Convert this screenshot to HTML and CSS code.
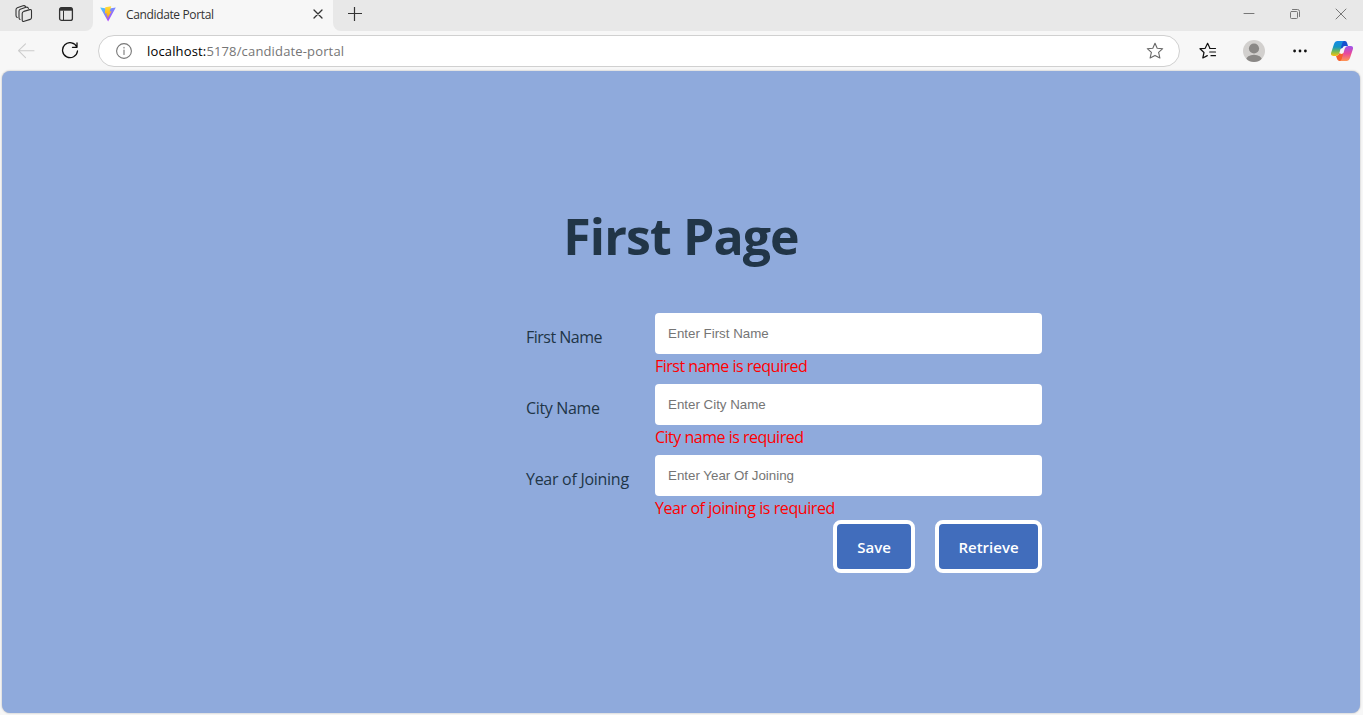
FILE: index.html
```html
<!DOCTYPE html>
<html lang="en">
<head>
<meta charset="utf-8">
<title>Candidate Portal</title>
<link rel="stylesheet" href="styles.css">
</head>
<body>
<div class="window">
  <header class="tabstrip">
    <div class="tools">
      <svg class="icon workspaces" width="18" height="18" viewBox="0 0 18 18"><path d="M8.8 6.4 14.8 4.6Q16.5 4.2 16.5 6V12.5Q16.5 14 15.2 14.4L9.2 16.3Q7.2 17 7.2 15V8.5Q7.2 6.9 8.8 6.4ZM5 14.5Q4 14 4 12.5V6.3Q4 4.8 5.3 4.3L11 2.3Q12.8 1.8 13.5 3.4M2.2 12.5Q1 12 1 10.2V4.7Q1 3.3 2.3 2.8L8 .8Q9.6.3 10.4 1.4"/></svg>
      <svg class="icon panes" width="16" height="16" viewBox="0 0 16 16"><rect x="1.6" y="1.6" width="12.8" height="12.8" rx="2"/><path class="bar" d="M2 3.2H14"/><path class="divider" d="M5.5 5V14"/></svg>
    </div>
    <div class="tab">
      <svg class="vite" width="16" height="16" viewBox="0 0 16 16"><defs><linearGradient id="v" x1="0" y1="0" x2=".7" y2="1"><stop stop-color="#41d1ff"/><stop offset="1" stop-color="#bd34fe"/></linearGradient><linearGradient id="b" x1="0" y1="0" x2="0" y2="1"><stop stop-color="#ffdf3d"/><stop offset="1" stop-color="#ffa000"/></linearGradient></defs><path fill="url(#v)" d="M.2 1.5 8 2.7 15.8 1.5 8.1 15.4Z"/><path fill="url(#b)" d="M11.2.2 5.3 1.2 4.9 7.6 6.8 7.2 6.4 9.8 7.7 9.4 7.1 13 11.6 5.3 9.6 5.7Z"/></svg>
      <span class="tab-title">Candidate Portal</span>
      <svg class="icon tab-close" width="10" height="10" viewBox="0 0 10 10"><path d="M1 1 9 9M9 1 1 9"/></svg>
    </div>
    <svg class="icon new-tab" width="14" height="14" viewBox="0 0 14 14"><path d="M0 6.5H14M6.5 0V14"/></svg>
    <div class="controls">
      <svg class="icon" width="12" height="12" viewBox="0 0 12 12"><path d="M1 5.5H11"/></svg>
      <svg class="icon" width="12" height="12" viewBox="0 0 12 12"><rect x="1.5" y="3.5" width="7" height="7" rx="1"/><path d="M3.5 1.5H8.5Q10.5 1.5 10.5 3.5V8.5"/></svg>
      <svg class="icon" width="12" height="12" viewBox="0 0 12 12"><path d="M1 1 11 11M11 1 1 11"/></svg>
    </div>
  </header>
  <nav class="toolbar">
    <svg class="icon back" width="18" height="16" viewBox="0 0 18 16"><path d="M17 7.7H1.5M8.5.8 1.5 7.7 8.5 14.6"/></svg>
    <svg class="icon reload" width="18" height="18" viewBox="0 0 18 18"><path d="M15.9 5.1A7.5 7.5 0 1 0 16.5 9M16 1V5.3H11.5"/></svg>
    <div class="address">
      <svg class="icon info" width="16" height="16" viewBox="0 0 16 16"><circle cx="8" cy="8" r="7.4"/><path d="M8 7V11.5M8 4.3V5"/></svg>
      <span class="url"><b>localhost:</b>5178/candidate-portal</span>
      <svg class="icon star" width="18" height="18" viewBox="0 0 18 18"><path d="M9 1.2 11.2 6.3 16.7 6.7 12.6 10.4 13.9 16 9 13.4 4.1 16 5.4 10.4 1.3 6.7 6.8 6.3Z"/></svg>
    </div>
    <svg class="icon favorites" width="18" height="18" viewBox="0 0 18 18"><path d="M10.7 5.8 8.6 1.3 6.2 6.3 1 6.7 5 10.5 3.8 16 8.3 13.6M10.7 6.5H16.5M10.7 10H16.5M12 13.7H16.5"/></svg>
    <svg class="avatar" width="22" height="22" viewBox="0 0 22 22"><defs><clipPath id="a"><circle cx="11" cy="11" r="11"/></clipPath></defs><g clip-path="url(#a)"><path fill="#d2d0ce" d="M0 0H22V22H0Z"/><circle cx="11" cy="8.5" r="5.1" fill="#8a8886"/><ellipse cx="11" cy="20" rx="8" ry="5.2" fill="#8a8886"/></g></svg>
    <svg class="more" width="14" height="4" viewBox="0 0 14 4"><circle cx="1.6" cy="2" r="1.4"/><circle cx="7" cy="2" r="1.4"/><circle cx="12.4" cy="2" r="1.4"/></svg>
    <svg class="copilot" width="22" height="20" viewBox="0 0 22 20"><defs><linearGradient id="c1" x1="0" y1="0" x2="0" y2="1"><stop stop-color="#1689e8"/><stop offset=".4" stop-color="#1496c2"/><stop offset=".72" stop-color="#7dbb50"/><stop offset="1" stop-color="#ffc20a"/></linearGradient><linearGradient id="c2" x1="0" y1="0" x2="0" y2="1"><stop stop-color="#9b54ef"/><stop offset=".5" stop-color="#e9489b"/><stop offset="1" stop-color="#ff9652"/></linearGradient></defs><path fill="#1550ce" d="M10 0H14Q15.5 0 16 1.7L17 5H13.8Q12.2 5 11.5 7L9 8Z"/><path fill="#f65f2b" d="M5 15 6.2 18.2Q6.8 20 8.6 20H11L13 12 10.5 13 8.3 12.2Q7.5 15 5 15Z"/><path fill="url(#c1)" d="M6.5 0H13Q11.8.4 11.2 2.3L8.3 12.2Q7.5 15 5 15H2.5Q-1 15 .3 11.2L3 3Q4 0 6.5 0Z"/><path fill="url(#c2)" d="M15.5 20H9Q10.2 19.6 10.8 17.7L13.7 7.8Q14.5 5 17 5H19.5Q23 5 21.7 8.8L19 17Q18 20 15.5 20Z"/></svg>
  </nav>
  <main class="page">
    <h1 class="title">First Page</h1>
    <form class="form" novalidate>
      <label class="label" for="first">First Name</label>
      <div class="field"><input class="input" id="first" placeholder="Enter First Name"><span class="error">First name is required</span></div>
      <label class="label city" for="city">City Name</label>
      <div class="field"><input class="input" id="city" placeholder="Enter City Name"><span class="error">City name is required</span></div>
      <label class="label year" for="year">Year of Joining</label>
      <div class="field"><input class="input" id="year" placeholder="Enter Year Of Joining"><span class="error long">Year of joining is required</span></div>
      <div class="actions"><button class="button save" type="button">Save</button><button class="button retrieve" type="button">Retrieve</button></div>
    </form>
  </main>
</div>
</body>
</html>
```
FILE: styles.css
```css
* { box-sizing: border-box; }
body { margin: 0; background: #f7f7f7; font-family: "Open Sans", "Noto Sans", sans-serif; overflow: hidden; }
.window { height: 715px; display: flex; flex-direction: column; }
svg { display: block; flex: none; }
.icon { fill: none; stroke: #333; stroke-width: 1.1; stroke-linejoin: round; stroke-linecap: round; }

.tabstrip { height: 31px; display: flex; align-items: flex-start; background: #f7f7f7; }
.tools { width: 93px; height: 31px; padding: 5px 0 0 15px; display: flex; gap: 25px; background: #e8e8e8; border-bottom-right-radius: 8px; }
.panes { margin-top: 1px; stroke-width: 1.3; }
.panes .bar { stroke-width: 3; stroke-linecap: butt; }
.panes .divider { stroke-width: 1; }
.tab { width: 240px; height: 31px; padding: 0 10px 3px 7px; display: flex; align-items: center; background: #f7f7f7; }
.tab-title { margin-left: 10px; font-size: 12px; letter-spacing: -.36px; color: #333; white-space: nowrap; }
.tab-close { margin-left: auto; stroke-width: 1.3; }
.new-tab { width: 29px; height: 31px; padding: 7px 0 10px 15px; background: #e8e8e8; border-bottom-left-radius: 8px; stroke-width: 1.2; stroke-linecap: butt; }
.controls { flex: 1; height: 31px; padding: 8px 16px 0 0; display: flex; justify-content: flex-end; gap: 34px; background: #e8e8e8; }
.controls .icon { stroke: #777; stroke-width: 1; }

.toolbar { height: 40px; padding-left: 17px; display: flex; align-items: center; }
.back { stroke: #ccc; }
.reload { margin-left: 26px; stroke: #111; stroke-width: 1.3; }
.address { width: 1082px; height: 32px; margin-left: 19px; padding: 0 15px 0 17px; display: flex; align-items: center; border: 1px solid #d0d0d0; border-radius: 16px; background: #fff; }
.info { stroke: #777; }
.url { margin-left: 15px; font-size: 13px; letter-spacing: .15px; color: #757575; white-space: nowrap; }
.url b { font-weight: 400; color: #000; }
.star { margin-left: auto; stroke: #666; }
.favorites { margin-left: 19px; stroke: #111; stroke-width: 1.2; }
.avatar { margin-left: 26px; }
.more { margin-left: 28px; fill: #111; }
.copilot { margin-left: 24px; }

.page { height: 642px; margin: 0 3px 0 2px; padding-top: 127px; border-radius: 8px; background: #8faadc; box-shadow: 0 0 2px #aaa; color: #213547; }
.title { margin: 0; text-align: center; font-size: 50px; letter-spacing: -.9px; line-height: 76px; font-weight: 700; }
.form { width: 516px; margin: 39px 0 0 524px; display: grid; grid-template-columns: 129px 387px; grid-auto-rows: 71px; font-size: 16px; }
.label { padding-top: 12px; line-height: 24px; letter-spacing: -.5px; white-space: nowrap; }
.city { letter-spacing: -.33px; }
.year { letter-spacing: -.28px; }
.input { display: block; width: 387px; height: 41px; padding: 0 13px; border: 0; border-radius: 4px; background: #fff; font: 13.333px "Liberation Sans", Arial, sans-serif; }
.input::placeholder { color: #757575; opacity: 1; }
.error { display: block; line-height: 24px; letter-spacing: -.5px; color: #f00; white-space: nowrap; }
.long { letter-spacing: -.42px; }
.actions { grid-column: 1 / 3; display: flex; justify-content: flex-end; gap: 20px; margin-top: -6px; }
.button { height: 53px; padding: 0; border: 4px solid #fff; border-radius: 8px; background: #416dbc; color: #fff; font: 600 15px "Open Sans", sans-serif; }
.save { width: 82px; }
.retrieve { width: 107px; }
```
